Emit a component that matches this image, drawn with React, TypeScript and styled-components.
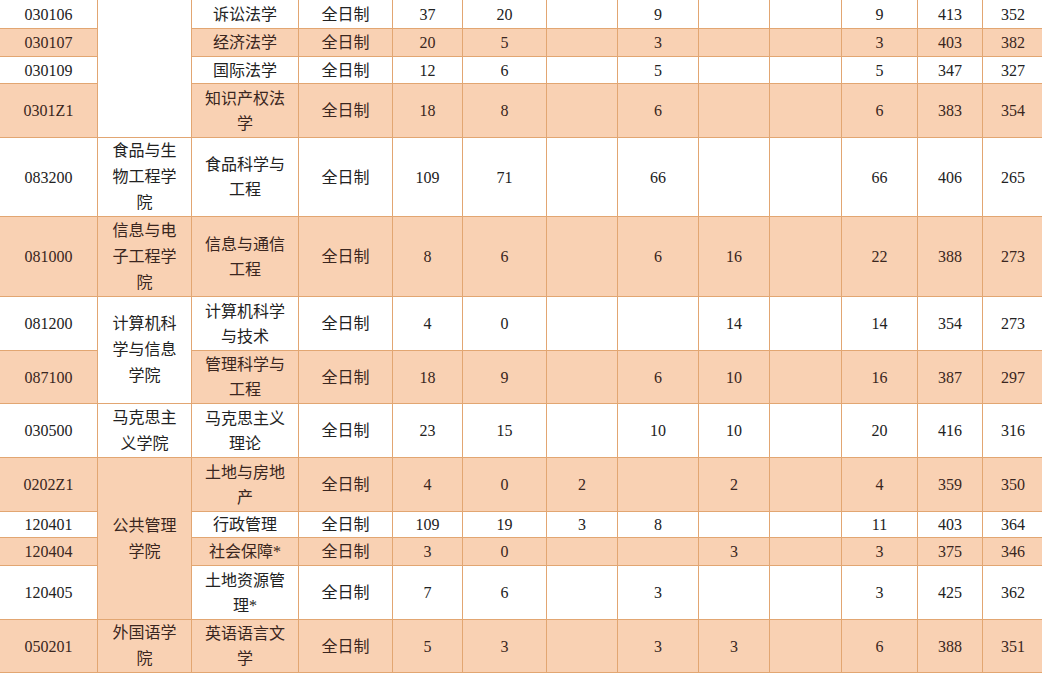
import React from "react";
import styled, { createGlobalStyle } from "styled-components";

const GlobalStyle = createGlobalStyle`
  html, body {
    margin: 0;
    padding: 0;
    background: #ffffff;
    overflow: hidden;
  }
`;

const WHITE = "#ffffff";
const PEACH = "#f9d1b3";
const LINE = "#e2a672";

type Tone = "white" | "peach";

const PageContainer = styled.div`
  width: 1042px;
  height: 673px;
  overflow: hidden;
  font-family: "Liberation Serif", "Noto Sans CJK SC", serif;
`;

const Sheet = styled.table`
  border-collapse: collapse;
  table-layout: fixed;
  width: 1044px;
  margin: -1px 0 0 -1px;
  font-size: 16px;
  line-height: 25px;
`;

const Row = styled.tr<{ $height: number }>`
  height: ${(p) => p.$height}px;
`;

const Cell = styled.td<{ $tone: Tone }>`
  border: 1px solid ${LINE};
  background: ${(p) => (p.$tone === "peach" ? PEACH : WHITE)};
  color: ${(p) => (p.$tone === "peach" ? "#3a2620" : "#222222")};
  text-align: center;
  vertical-align: middle;
  padding: 0;
  overflow: hidden;
`;

const CollegeCell = styled(Cell)`
  padding: 0 8px;
  line-height: 26px;
`;

const MajorCell = styled(Cell)`
  padding: 0 8px;
`;

const widths = [98, 94, 107, 94, 70, 84, 71, 81, 71, 72, 76, 65, 61];

type College = { text: string; span: number; tone: Tone };

type Line = {
  code: string;
  height: number;
  college?: College;
  major: string;
  vals: string[];
};

const lines: Line[] = [
  { code: "030106", height: 29, college: { text: "", span: 4, tone: "white" }, major: "诉讼法学", vals: ["37", "20", "", "9", "", "", "9", "413", "352"] },
  { code: "030107", height: 28, major: "经济法学", vals: ["20", "5", "", "3", "", "", "3", "403", "382"] },
  { code: "030109", height: 27, major: "国际法学", vals: ["12", "6", "", "5", "", "", "5", "347", "327"] },
  { code: "0301Z1", height: 54, major: "知识产权法学", vals: ["18", "8", "", "6", "", "", "6", "383", "354"] },
  { code: "083200", height: 79, college: { text: "食品与生物工程学院", span: 1, tone: "white" }, major: "食品科学与工程", vals: ["109", "71", "", "66", "", "", "66", "406", "265"] },
  { code: "081000", height: 80, college: { text: "信息与电子工程学院", span: 1, tone: "peach" }, major: "信息与通信工程", vals: ["8", "6", "", "6", "16", "", "22", "388", "273"] },
  { code: "081200", height: 54, college: { text: "计算机科学与信息学院", span: 2, tone: "white" }, major: "计算机科学与技术", vals: ["4", "0", "", "", "14", "", "14", "354", "273"] },
  { code: "087100", height: 53, major: "管理科学与工程", vals: ["18", "9", "", "6", "10", "", "16", "387", "297"] },
  { code: "030500", height: 54, college: { text: "马克思主义学院", span: 1, tone: "white" }, major: "马克思主义理论", vals: ["23", "15", "", "10", "10", "", "20", "416", "316"] },
  { code: "0202Z1", height: 54, college: { text: "公共管理学院", span: 4, tone: "peach" }, major: "土地与房地产", vals: ["4", "0", "2", "", "2", "", "4", "359", "350"] },
  { code: "120401", height: 26, major: "行政管理", vals: ["109", "19", "3", "8", "", "", "11", "403", "364"] },
  { code: "120404", height: 28, major: "社会保障*", vals: ["3", "0", "", "", "3", "", "3", "375", "346"] },
  { code: "120405", height: 54, major: "土地资源管理*", vals: ["7", "6", "", "3", "", "", "3", "425", "362"] },
  { code: "050201", height: 51, college: { text: "外国语学院", span: 1, tone: "peach" }, major: "英语语言文学", vals: ["5", "3", "", "3", "3", "", "6", "388", "351"] },
];

export default function App() {
  return (
    <PageContainer>
      <GlobalStyle />
      <Sheet>
        <colgroup>
          {widths.map((w, i) => (
            <col key={i} style={{ width: w }} />
          ))}
        </colgroup>
        <tbody>
          {lines.map((l, i) => {
            const tone: Tone = i % 2 === 0 ? "white" : "peach";
            return (
              <Row key={l.code} $height={l.height}>
                <Cell $tone={tone}>{l.code}</Cell>
                {l.college && (
                  <CollegeCell $tone={l.college.tone} rowSpan={l.college.span}>
                    {l.college.text}
                  </CollegeCell>
                )}
                <MajorCell $tone={tone}>{l.major}</MajorCell>
                <Cell $tone={tone}>全日制</Cell>
                {l.vals.map((v, j) => (
                  <Cell key={j} $tone={tone}>
                    {v}
                  </Cell>
                ))}
              </Row>
            );
          })}
        </tbody>
      </Sheet>
    </PageContainer>
  );
}
